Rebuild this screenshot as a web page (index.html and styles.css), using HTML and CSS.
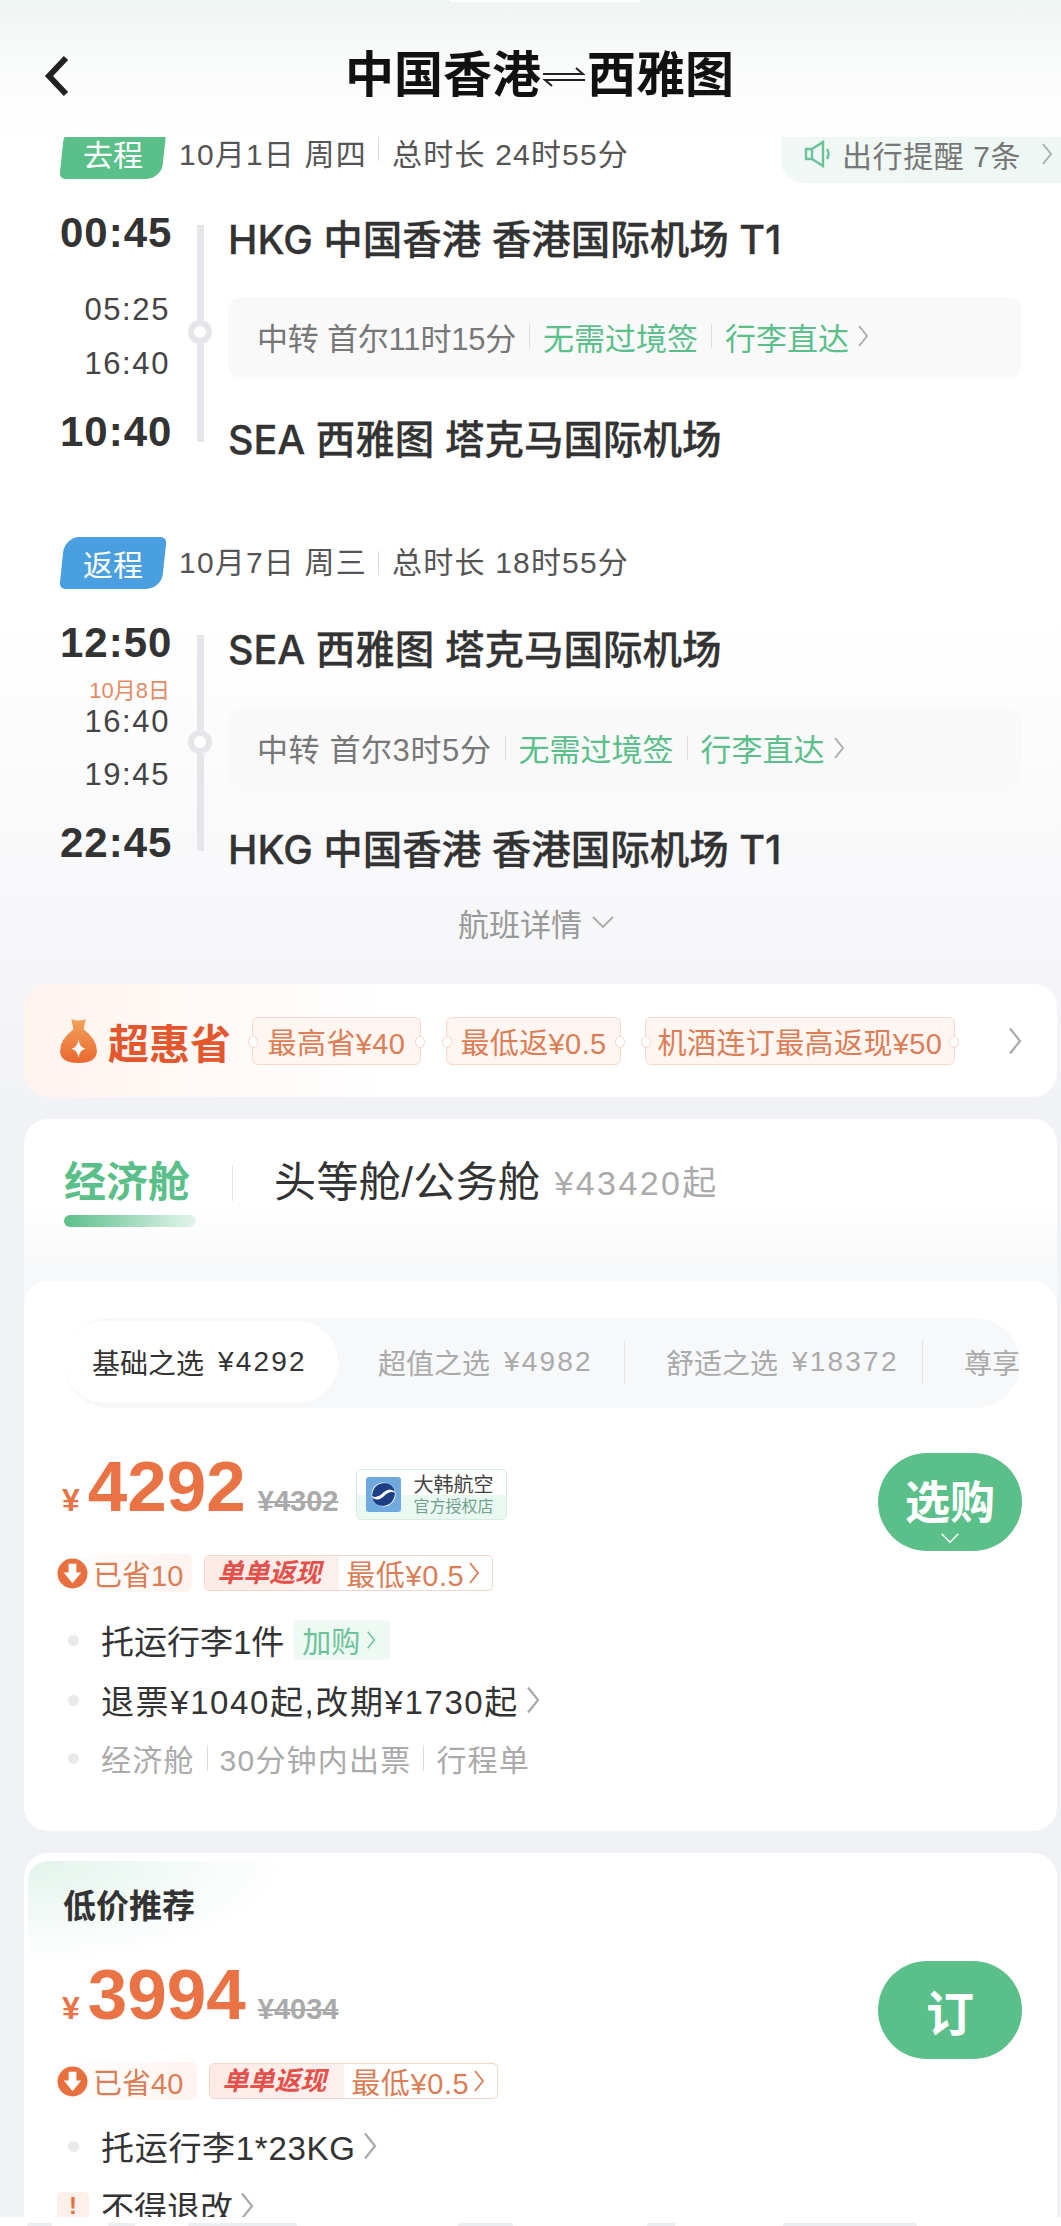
FILE: index.html
```html
<!DOCTYPE html>
<html lang="zh-CN">
<head>
    <meta charset="UTF-8">
    <meta name="viewport" content="width=device-width, initial-scale=1.0">
    <title>中国香港 - 西雅图</title>
    <link rel="stylesheet" href="styles.css">
</head>
<body>
    <svg class="defs" width="0" height="0">
        <symbol id="chev-right" viewBox="0 0 12 24"><polyline points="2,2 10,12 2,22" fill="none" stroke="currentColor" stroke-width="1.8"/></symbol>
        <symbol id="chev-down" viewBox="0 0 24 14"><polyline points="2,2 12,12 22,2" fill="none" stroke="currentColor" stroke-width="1.8"/></symbol>
    </svg>

    <div class="page">
        <header class="topbar">
            <svg class="back" viewBox="0 0 25 42"><polyline points="22,3 5,21 22,39" fill="none" stroke="#222" stroke-width="6"/></svg>
            <h1 class="title">中国香港<svg class="swap" viewBox="0 0 46 20"><path d="M2 7H42L35 1M44 13H4L11 19" fill="none" stroke="#222" stroke-width="2"/></svg>西雅图</h1>
        </header>

        <main class="content">
            <!-- 去程 -->
            <section class="leg">
                <div class="leg-head leg-head-cut">
                    <span class="tag tag-green"><span>去程</span></span>
                    <span class="leg-date">10月1日 周四</span>
                    <i class="sep"></i>
                    <span class="leg-date">总时长 24时55分</span>
                    <div class="notice">
                        <svg class="speaker" viewBox="0 0 28 30"><path d="M2 10H8L19 3V27L8 20H2ZM8 10V20M23 10Q26 15 23 20" fill="none" stroke="#6cc39a" stroke-width="2.4"/></svg>
                        <span>出行提醒 7条</span>
                        <svg class="chev notice-chev"><use href="#chev-right"/></svg>
                    </div>
                </div>
                <div class="route route-out">
                    <div class="times">
                        <div class="time-big">00:45</div>
                        <div class="time-mid t-out-1">05:25</div>
                        <div class="time-mid t-out-2">16:40</div>
                        <div class="time-big t-out-3">10:40</div>
                    </div>
                    <div class="rail">
                        <i class="rail-line"></i>
                        <i class="rail-dot"></i>
                        <i class="rail-line rail-line-long"></i>
                    </div>
                    <div class="stops">
                        <div class="stop">HKG 中国香港 香港国际机场 T1</div>
                        <div class="transfer">
                            <span class="transfer-city">中转 首尔11时15分</span>
                            <i class="sep"></i>
                            <span class="green">无需过境签</span>
                            <i class="sep"></i>
                            <span class="green">行李直达</span>
                            <svg class="chev transfer-chev"><use href="#chev-right"/></svg>
                        </div>
                        <div class="stop stop-end">SEA 西雅图 塔克马国际机场</div>
                    </div>
                </div>
            </section>

            <!-- 返程 -->
            <section class="leg leg-back">
                <div class="leg-head">
                    <span class="tag tag-blue"><span>返程</span></span>
                    <span class="leg-date">10月7日 周三</span>
                    <i class="sep"></i>
                    <span class="leg-date">总时长 18时55分</span>
                </div>
                <div class="route route-back">
                    <div class="times">
                        <div class="time-big">12:50</div>
                        <div class="next-day">10月8日</div>
                        <div class="time-mid t-back-1">16:40</div>
                        <div class="time-mid t-back-2">19:45</div>
                        <div class="time-big t-back-3">22:45</div>
                    </div>
                    <div class="rail">
                        <i class="rail-line"></i>
                        <i class="rail-dot"></i>
                        <i class="rail-line rail-line-long"></i>
                    </div>
                    <div class="stops">
                        <div class="stop">SEA 西雅图 塔克马国际机场</div>
                        <div class="transfer transfer-back">
                            <span class="transfer-city">中转 首尔3时5分</span>
                            <i class="sep"></i>
                            <span class="green">无需过境签</span>
                            <i class="sep"></i>
                            <span class="green">行李直达</span>
                            <svg class="chev transfer-chev"><use href="#chev-right"/></svg>
                        </div>
                        <div class="stop stop-end-back">HKG 中国香港 香港国际机场 T1</div>
                    </div>
                </div>
            </section>

            <div class="details">航班详情<svg class="chev-d"><use href="#chev-down"/></svg></div>

            <!-- 超惠省 -->
            <section class="promo">
                <svg class="bag" viewBox="0 0 38 46">
                    <defs><linearGradient id="bagfill" x1="0" y1="0" x2="0" y2="1"><stop offset="0" stop-color="#f2a25c"/><stop offset="1" stop-color="#e9682f"/></linearGradient></defs>
                    <path d="M12 2Q19 5 26 2L24 12Q37 22 37 33Q37 45 19 45Q1 45 1 33Q1 22 14 12Z" fill="url(#bagfill)"/>
                    <path d="M19 22Q20 30 26 31Q20 32 19 40Q18 32 12 31Q18 30 19 22Z" fill="#fff"/>
                </svg>
                <span class="promo-name">超惠省</span>
                <span class="coupon coupon-1">最高省¥40</span>
                <span class="coupon coupon-2">最低返¥0.5</span>
                <span class="coupon coupon-3">机酒连订最高返现¥50</span>
                <svg class="chev promo-chev"><use href="#chev-right"/></svg>
            </section>

            <!-- 舱位 -->
            <section class="cabin">
                <div class="cabin-head">
                    <div class="cabin-on">
                        <span>经济舱</span>
                        <i class="cabin-bar"></i>
                    </div>
                    <i class="cabin-sep"></i>
                    <span class="cabin-off">头等舱/公务舱</span>
                    <span class="cabin-from">¥43420起</span>
                </div>

                <div class="fare fare-first">
                    <div class="tabs">
                        <div class="tab tab-on">基础之选<b>¥4292</b></div>
                        <div class="tab tab-2">超值之选<b>¥4982</b></div>
                        <i class="tab-sep"></i>
                        <div class="tab tab-3">舒适之选<b>¥18372</b></div>
                        <i class="tab-sep"></i>
                        <div class="tab tab-4">尊享</div>
                    </div>

                    <div class="fare-row">
                        <div class="fare-info">
                            <div class="price-row">
                                <span class="yen">¥</span>
                                <span class="price">4292</span>
                                <span class="old-price">¥4302</span>
                                <div class="airline">
                                    <svg class="airline-logo" viewBox="0 0 35 35">
                                        <rect width="35" height="35" rx="3" fill="#6fa9de"/>
                                        <circle cx="17.5" cy="17.5" r="12" fill="#fff"/>
                                        <path d="M6 19Q7 7 18 6Q27 6 29 15Q24 10 18 15Q11 22 6 19ZM29 16Q28 28 17 29Q8 29 6 20Q11 25 17 20Q24 13 29 16Z" fill="#1d3f86"/>
                                    </svg>
                                    <div class="airline-text">
                                        <span class="airline-name">大韩航空</span>
                                        <span class="airline-sub">官方授权店</span>
                                    </div>
                                </div>
                            </div>
                            <div class="perks">
                                <span class="saved">
                                    <svg class="saved-icon" viewBox="0 0 32 32"><circle cx="16" cy="16" r="15.5" fill="#e8703f"/><path d="M12 6H20V15H25L16 26L7 15H12Z" fill="#fff"/></svg>
                                    已省10
                                </span>
                                <span class="rebate">
                                    <b class="rebate-name">单单返现</b>
                                    <span class="rebate-low">最低¥0.5</span>
                                    <svg class="chev rebate-chev"><use href="#chev-right"/></svg>
                                </span>
                            </div>
                            <ul class="rules">
                                <li class="rule">托运行李1件<span class="addon">加购<svg class="chev addon-chev"><use href="#chev-right"/></svg></span></li>
                                <li class="rule rule-2">退票¥1040起,改期¥1730起<svg class="chev rule-chev"><use href="#chev-right"/></svg></li>
                                <li class="rule rule-3 rule-mute">经济舱<i class="sep"></i>30分钟内出票<i class="sep"></i>行程单</li>
                            </ul>
                        </div>
                        <button class="buy">选购<svg class="buy-chev"><use href="#chev-down"/></svg></button>
                    </div>
                </div>
            </section>

            <!-- 低价推荐 -->
            <section class="fare fare-low">
                <div class="low-head">低价推荐</div>
                <div class="fare-row fare-row-low">
                    <div class="fare-info">
                        <div class="price-row">
                            <span class="yen">¥</span>
                            <span class="price">3994</span>
                            <span class="old-price">¥4034</span>
                        </div>
                        <div class="perks">
                            <span class="saved saved-wide">
                                <svg class="saved-icon" viewBox="0 0 32 32"><circle cx="16" cy="16" r="15.5" fill="#e8703f"/><path d="M12 6H20V15H25L16 26L7 15H12Z" fill="#fff"/></svg>
                                已省40
                            </span>
                            <span class="rebate">
                                <b class="rebate-name">单单返现</b>
                                <span class="rebate-low">最低¥0.5</span>
                                <svg class="chev rebate-chev"><use href="#chev-right"/></svg>
                            </span>
                        </div>
                        <ul class="rules rules-low">
                            <li class="rule rule-kg">托运行李1*23KG<svg class="chev rule-chev"><use href="#chev-right"/></svg></li>
                            <li class="rule rule-warn"><span class="warn">!</span>不得退改<svg class="chev rule-chev"><use href="#chev-right"/></svg></li>
                        </ul>
                    </div>
                    <button class="buy buy-book">订</button>
                </div>
            </section>
        </main>

        <div class="bottom">
            <i class="stub"></i><i class="stub"></i><i class="stub"></i><i class="stub"></i><i class="stub"></i><i class="stub"></i>
        </div>
    </div>
</body>
</html>
```
FILE: styles.css
```css
* {
    box-sizing: border-box;
}

body {
    margin: 0;
    font-family: "Liberation Sans", "Noto Sans CJK SC", sans-serif;
    color: #333;
}

.defs {
    position: absolute;
}

.page {
    width: 1061px;
    height: 2226px;
    display: flex;
    flex-direction: column;
    overflow: hidden;
    background: linear-gradient(180deg, #eff5f2 0, #fafcfb 70px, #fff 140px, #fff 620px, #f1f2f5 1110px, #eff1f4 100%);
}

/* top bar */
.topbar {
    position: relative;
    height: 137px;
    flex: none;
    display: flex;
    align-items: flex-start;
    padding: 54px 0 0 44px;
}

.topbar::before {
    content: "";
    position: absolute;
    left: 450px;
    top: 0;
    width: 190px;
    height: 2px;
    background: #fff;
}

.back {
    width: 25px;
    height: 42px;
    margin-top: 1px;
}

.title {
    margin: -7px 0 0 276px;
    font-size: 49px;
    line-height: 56px;
    font-weight: 700;
    color: #111;
    display: flex;
    align-items: center;
}

.swap {
    width: 46px;
    height: 20px;
    margin-top: 4px;
}

.content {
    flex: 1;
    min-height: 0;
    overflow: hidden;
}

/* flight legs */
.leg {
    padding-left: 60px;
}

.leg-head {
    display: flex;
    align-items: center;
    height: 52px;
}

.leg-head-cut {
    height: 46px;
    align-items: flex-start;
    overflow: hidden;
}

.leg-head-cut .tag {
    margin-top: -10px;
}

.leg-head-cut .leg-date {
    margin-top: 1px;
}

.leg-head-cut .sep {
    margin-top: 6px;
}

.leg-back {
    margin-top: 77px;
}

.tag {
    position: relative;
    width: 106px;
    height: 52px;
    flex: none;
    display: flex;
    align-items: center;
    justify-content: center;
    color: #fff;
    font-size: 30px;
}

.tag::before {
    content: "";
    position: absolute;
    inset: 0 2px;
    border-radius: 15px 6px 15px 6px;
    transform: skewX(-6deg);
}

.tag span {
    position: relative;
}

.tag-green::before {
    background: #5bbf8a;
}

.tag-blue::before {
    background: #4a9fe0;
}

.leg-date {
    font-size: 30px;
    letter-spacing: 1.2px;
    line-height: 34px;
    color: #555;
    margin-left: 13px;
    white-space: nowrap;
}

.sep {
    display: inline-block;
    width: 1px;
    height: 24px;
    background: #ddd;
    margin: 0 13px;
    flex: none;
}

.leg-date + .sep {
    margin: 0 0 0 11px;
}

.notice {
    margin-left: auto;
    width: 280px;
    height: 46px;
    padding: 0 0 12px 23px;
    display: flex;
    align-items: center;
    color: #777;
    font-size: 30px;
    letter-spacing: 0.6px;
    border-radius: 0 0 0 22px;
    background: linear-gradient(90deg, #f1f8f5, #eef7f3);
}

.speaker {
    width: 28px;
    height: 30px;
    margin-right: 10px;
    flex: none;
}

.chev {
    display: inline-block;
    flex: none;
    width: 12px;
    height: 24px;
    color: #aaa;
}

.notice-chev {
    margin-left: 20px;
}

.route {
    display: flex;
}

.route-out {
    margin-top: 32px;
}

.route-back {
    margin-top: 36px;
}

.times {
    width: 110px;
    flex: none;
    text-align: right;
}

.time-big {
    font-size: 42px;
    letter-spacing: 1px;
    line-height: 36px;
    height: 36px;
    font-weight: 700;
    color: #333;
}

.time-mid {
    font-size: 31px;
    line-height: 30px;
    height: 30px;
    letter-spacing: 1.6px;
    color: #444;
}

.t-out-1 {
    margin-top: 44px;
}

.t-out-2 {
    margin-top: 24px;
}

.t-out-3 {
    margin-top: 35px;
}

.next-day {
    margin-top: 17px;
    height: 26px;
    font-size: 22px;
    line-height: 26px;
    color: #e58a62;
}

.t-back-1 {
    margin-top: 3px;
}

.t-back-2 {
    margin-top: 23px;
}

.t-back-3 {
    margin-top: 35px;
}

.rail {
    width: 24px;
    margin: 10px 0 0 18px;
    flex: none;
    display: flex;
    flex-direction: column;
    align-items: center;
}

.rail-line {
    width: 7px;
    height: 95px;
    background: #e5e6e9;
}

.rail-line-long {
    height: 98px;
}

.route-back .rail-line-long {
    height: 97px;
}

.rail-dot {
    width: 24px;
    height: 24px;
    flex: none;
    border: 6px solid #e5e6e9;
    border-radius: 50%;
    background: #fff;
}

.stops {
    margin-left: 16px;
    width: 794px;
}

.stop {
    margin-top: 5px;
    font-family: Inter, "Noto Sans CJK SC", sans-serif;
    font-size: 39.5px;
    line-height: 40px;
    font-weight: 500;
    color: #333;
    -webkit-text-stroke: 0.3px #333;
    white-space: nowrap;
}

.stop-end {
    margin-top: 42px;
}

.stop-end-back {
    margin-top: 40px;
}

.transfer {
    margin-top: 37px;
    height: 81px;
    padding: 0 0 3px 29px;
    display: flex;
    align-items: center;
    border-radius: 14px;
    background: #f9f9fa;
    font-size: 31px;
    color: #777;
    white-space: nowrap;
}

.transfer-back {
    margin-top: 38px;
    height: 82px;
}

.transfer-city {
    letter-spacing: -0.2px;
}

.transfer-back .transfer-city {
    letter-spacing: 0.6px;
}

.transfer .sep {
    margin: 0 13px;
}

.green {
    color: #5bbf8a;
}

.transfer-chev {
    margin-left: 8px;
}

.details {
    margin-top: 30px;
    margin-left: 458px;
    height: 44px;
    display: flex;
    align-items: center;
    font-size: 31px;
    color: #999;
}

.chev-d {
    width: 24px;
    height: 14px;
    margin-left: 9px;
    color: #aaa;
}

/* promo strip */
.promo {
    margin: 40px 4px 0 24px;
    height: 113px;
    padding-left: 35px;
    display: flex;
    align-items: center;
    border-radius: 24px;
    background: linear-gradient(90deg, #fff3ee, #fff 35%);
}

.bag {
    width: 39px;
    height: 47px;
    flex: none;
}

.promo-name {
    margin-left: 10px;
    width: 122px;
    flex: none;
    font-size: 41px;
    font-weight: 700;
    color: #e4572e;
    white-space: nowrap;
}

.coupon {
    position: relative;
    height: 48px;
    flex: none;
    display: flex;
    align-items: center;
    justify-content: center;
    border: 1px solid #f6d9cc;
    border-radius: 6px;
    background: #fff6f2;
    font-size: 29px;
    letter-spacing: 0.4px;
    color: #dc7d55;
    white-space: nowrap;
}

/* coupon notches */
.coupon::before,
.coupon::after {
    content: "";
    position: absolute;
    top: 18px;
    width: 8px;
    height: 10px;
    border: 1px solid #f6d9cc;
    border-radius: 50%;
    background: #fff;
}

.coupon::before {
    left: -5px;
}

.coupon::after {
    right: -5px;
}

.coupon-1 {
    margin-left: 22px;
    width: 169px;
}

.coupon-2 {
    margin-left: 25px;
    width: 175px;
}

.coupon-3 {
    margin-left: 24px;
    width: 310px;
}

.promo-chev {
    margin-left: 52px;
    width: 16px;
    height: 30px;
}

/* cabin card */
.cabin {
    margin: 22px 4px 0 24px;
    border-radius: 24px;
    overflow: hidden;
    background: linear-gradient(180deg, #fff 0, #fff 90px, #f7f8f9 150px);
}

.cabin-head {
    height: 162px;
    padding: 40px 0 0 40px;
    display: flex;
    align-items: flex-start;
}

.cabin-on {
    width: 132px;
    color: #5bbf8a;
    font-size: 42px;
    line-height: 48px;
    font-weight: 700;
}

.cabin-on span {
    display: block;
    white-space: nowrap;
}

.cabin-bar {
    display: block;
    height: 12px;
    margin-top: 8px;
    border-radius: 6px;
    background: linear-gradient(90deg, #5bbf8a, #e4f5ec);
}

.cabin-sep {
    width: 1px;
    height: 36px;
    margin: 6px 0 0 36px;
    background: #e3e3e3;
}

.cabin-off {
    margin-left: 41px;
    font-size: 42px;
    letter-spacing: 0.4px;
    line-height: 48px;
    color: #333;
    white-space: nowrap;
}

.cabin-from {
    margin-left: 14px;
    font-size: 34px;
    letter-spacing: 2.4px;
    line-height: 48px;
    color: #aaa;
    white-space: nowrap;
}

/* fare cards */
.fare {
    padding: 0 35px 0 33px;
    background: #fff;
    border-radius: 24px;
}

.fare-first {
    padding-top: 37px;
    padding-bottom: 53px;
}

.tabs {
    margin: 0 -33px 0 7px;
    width: 956px;
    height: 90px;
    padding-top: 3px;
    display: flex;
    align-items: flex-start;
    overflow: hidden;
    border-radius: 45px;
    background: #f7f8f9;
}

.tab {
    height: 82px;
    flex: none;
    display: flex;
    align-items: center;
    font-size: 28px;
    color: #aaa;
    white-space: nowrap;
}

.tab b {
    font-weight: 400;
    margin-left: 14px;
    letter-spacing: 2.2px;
}

.tab-on {
    width: 274px;
    padding-left: 28px;
    border-radius: 41px;
    background: #fff;
    color: #333;
}

.tab-2 {
    width: 286px;
    padding-left: 40px;
}

.tab-sep {
    width: 1px;
    height: 44px;
    margin-top: 19px;
    background: #e6e6e6;
    flex: none;
}

.tab-3 {
    width: 297px;
    padding-left: 41px;
}

.tab-4 {
    padding-left: 41px;
}

.fare-row {
    display: flex;
    justify-content: space-between;
    margin-top: 45px;
}

.fare-info {
    flex: 1;
    min-width: 0;
}

.price-row {
    display: flex;
    align-items: baseline;
    height: 68px;
    padding-left: 5px;
}

.yen {
    font-size: 32px;
    font-weight: 700;
    color: #ea7345;
}

.price {
    margin-left: 8px;
    font-size: 71px;
    line-height: 68px;
    font-weight: 700;
    color: #ea7345;
}

.old-price {
    margin-left: 12px;
    font-size: 29px;
    font-weight: 700;
    color: #aaa;
    text-decoration: line-through;
}

.airline {
    margin-left: 18px;
    align-self: flex-end;
    margin-bottom: 1px;
    width: 151px;
    height: 51px;
    flex: none;
    display: flex;
    align-items: center;
    padding-left: 9px;
    border: 1px solid #d5ece2;
    border-radius: 5px;
    background: linear-gradient(#fff 0, #fff 50%, #eaf8f2 50%, #eaf8f2 100%);
}

.airline-logo {
    width: 35px;
    height: 35px;
    flex: none;
}

.airline-text {
    margin-left: 12px;
    display: flex;
    flex-direction: column;
    white-space: nowrap;
}

.airline-name {
    font-size: 20px;
    line-height: 24px;
    color: #444;
}

.airline-sub {
    font-size: 16px;
    line-height: 20px;
    color: #6e9f8b;
}

.perks {
    margin-top: 33px;
    display: flex;
    align-items: center;
    height: 38px;
}

.saved {
    height: 38px;
    padding-right: 9px;
    display: flex;
    align-items: center;
    gap: 5px;
    border-radius: 6px;
    background: linear-gradient(90deg, #fff, #fdf3ef);
    color: #dc7d55;
    font-size: 29px;
    white-space: nowrap;
}

.saved-wide {
    padding-right: 14px;
}

.saved-icon {
    width: 31px;
    height: 31px;
    flex: none;
}

.rebate {
    margin-left: 12px;
    width: 289px;
    height: 36px;
    display: flex;
    align-items: center;
    border: 1px solid #f3d5cc;
    border-radius: 5px;
    white-space: nowrap;
    overflow: hidden;
    font-size: 29px;
}

.rebate-name {
    width: 134px;
    height: 34px;
    line-height: 34px;
    padding-left: 12px;
    flex: none;
    font-size: 26px;
    font-style: italic;
    color: #e5504a;
    background: linear-gradient(90deg, #fdeae6, #fdf1ed);
}

.rebate-low {
    margin-left: 7px;
    letter-spacing: 0.6px;
    color: #dc7d55;
}

.rebate-chev {
    margin-left: 4px;
    color: #dc7d55;
}

.rules {
    margin: 28px 0 0;
    padding: 0;
    list-style: none;
}

.rules-low {
    margin-top: 26px;
}

.rule {
    position: relative;
    height: 40px;
    padding-left: 44px;
    display: flex;
    align-items: center;
    font-size: 33px;
    color: #333;
    white-space: nowrap;
}

.rule::before {
    content: "";
    position: absolute;
    left: 11px;
    top: 15px;
    width: 11px;
    height: 11px;
    border-radius: 50%;
    background: #e9eaec;
}

.rule-2 {
    margin-top: 20px;
    letter-spacing: 1.6px;
}

.rule-3 {
    margin-top: 18px;
}

.rule-kg {
    letter-spacing: 0.7px;
}

.rule-mute {
    font-size: 30px;
    letter-spacing: 1.2px;
    color: #aaa;
}

.rule-mute .sep {
    height: 26px;
    margin: 0 12px;
}

.rule-warn {
    margin-top: 20px;
}

.rule-warn::before {
    display: none;
}

.warn {
    position: absolute;
    left: 0;
    top: 6px;
    width: 32px;
    height: 28px;
    border-radius: 5px;
    background: #fdf0ea;
    color: #e8703f;
    font-size: 24px;
    line-height: 28px;
    font-weight: 700;
    text-align: center;
}

.addon {
    margin-left: 9px;
    width: 97px;
    height: 40px;
    padding-left: 9px;
    display: flex;
    align-items: center;
    border-radius: 4px;
    background: #eef9f4;
    color: #6cc39a;
    font-size: 29px;
}

.addon-chev {
    margin-left: 6px;
    color: #6cc39a;
    width: 10px;
    height: 20px;
}

.rule-chev {
    margin-left: 6px;
    width: 16px;
    height: 30px;
}

.buy {
    position: relative;
    width: 144px;
    height: 98px;
    flex: none;
    padding: 0 0 6px;
    border: none;
    border-radius: 49px;
    background: #5bbf8a;
    color: #fff;
    font-family: inherit;
    font-size: 45px;
    font-weight: 700;
}

.buy-chev {
    position: absolute;
    left: 62px;
    top: 79px;
    width: 20px;
    height: 12px;
}

.buy-book {
    padding: 0;
    font-size: 48px;
}

.fare-low {
    margin: 22px 4px 0 24px;
    padding-top: 8px;
    height: 400px;
}

.low-head {
    height: 100px;
    margin: 0 -33px;
    margin-left: -29px;
    padding: 26px 0 0 35px;
    width: 252px;
    border-radius: 20px 0 0 0;
    background: radial-gradient(ellipse at top left, #e2f4ec 0, #f5fbf8 45%, #fff 72%);
    font-size: 33px;
    line-height: 40px;
    font-weight: 700;
    color: #333;
}

.fare-row-low {
    margin-top: 0;
}

/* cut off strip at the very bottom */
.bottom {
    height: 9px;
    flex: none;
    position: relative;
    display: flex;
    align-items: flex-end;
    background: #fff;
}

.stub {
    height: 3px;
    background: #eceef1;
    flex: none;
}

.stub:nth-child(1) {
    margin-left: 27px;
    width: 25px;
}

.stub:nth-child(2) {
    margin-left: 56px;
    width: 27px;
}

.stub:nth-child(3) {
    margin-left: 53px;
    width: 109px;
}

.stub:nth-child(4) {
    margin-left: 161px;
    width: 55px;
}

.stub:nth-child(5) {
    margin-left: 134px;
    width: 28px;
}

.stub:nth-child(6) {
    margin-left: 108px;
    width: 134px;
}
```
